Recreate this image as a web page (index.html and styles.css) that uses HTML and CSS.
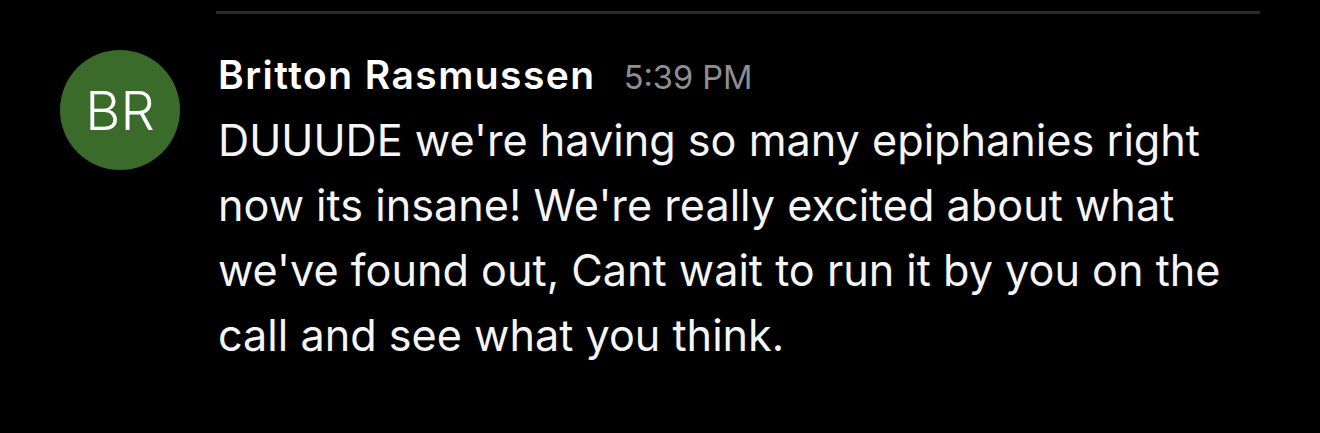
FILE: index.html
```html
<!DOCTYPE html>
<html lang="en">
<head>
    <meta charset="UTF-8">
    <meta name="viewport" content="width=device-width, initial-scale=1.0">
    <title>Message</title>
    <link rel="stylesheet" href="styles.css">
</head>
<body>
    <div class="thread">
        <div class="divider"></div>

        <div class="message">
            <div class="avatar">BR</div>
            <div class="content">
                <div class="meta">
                    <span class="name">Britton Rasmussen</span>
                    <span class="time">5:39 PM</span>
                </div>
                <p class="text">DUUUDE we're having so many epiphanies right now its insane! We're really excited about what we've found out, Cant wait to run it by you on the call and see what you think.</p>
            </div>
        </div>
    </div>
</body>
</html>
```

FILE: styles.css
```css
body {
    margin: 0;
    background: #000;
    color: #fff;
    font-family: 'Inter', 'Roboto', sans-serif;
}

.thread {
    padding-top: 11px;
}

.divider {
    height: 3px;
    background: #2a2a2c;
    margin: 0 60px 0 216px;
}

.message {
    display: flex;
    gap: 38px;
    padding: 36px 60px 0 60px;
}

.avatar {
    flex: 0 0 120px;
    width: 120px;
    height: 120px;
    border-radius: 50%;
    background: #3a6b2b;
    color: #fff;
    display: flex;
    justify-content: center;
    align-items: center;
    font-size: 54px;
    font-weight: 300;
}

.content {
    flex: 1;
    padding-top: 1px;
}

.meta {
    display: flex;
    align-items: baseline;
    gap: 28px;
    line-height: 48px;
}

.name {
    font-size: 39px;
    font-weight: 600;
    letter-spacing: 1.45px;
}

.time {
    font-size: 32.6px;
    color: #8e8e93;
}

.text {
    margin: 7px 0 0;
    font-size: 43.2px;
    line-height: 65px;
    color: #f5f5f5;
}
```
